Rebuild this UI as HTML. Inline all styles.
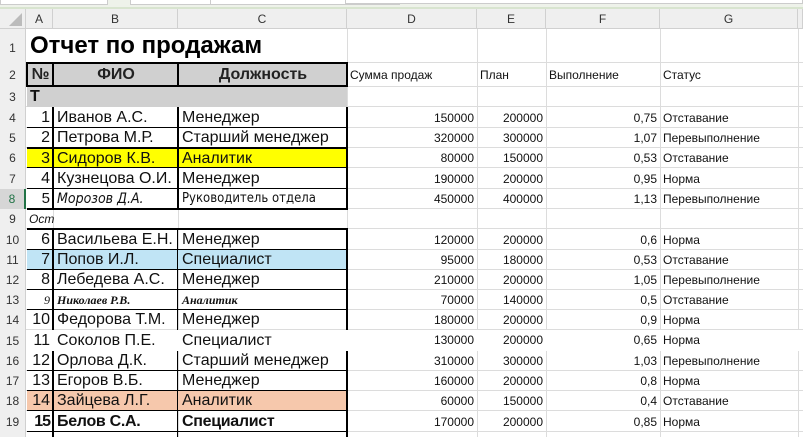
<!DOCTYPE html>
<html><head><meta charset="utf-8"><style>
body{margin:0;width:803px;height:437px;overflow:hidden;background:#fff;position:relative;font-family:"Liberation Sans",Arial,sans-serif;}
div{position:absolute;box-sizing:border-box;}
.vl{top:9px;bottom:0;width:1px;background:#dcdcdc}
.hl{left:0;right:0;height:1px;background:#dcdcdc}
.rh{left:0;width:26px;background:#efefef;border-right:1px solid #d0d0d0;font-size:12px;color:#333;text-align:center}
.ch{top:9px;height:20px;background:#efefef;font-size:12px;color:#333;text-align:center;line-height:20px;border-right:1px solid #d0d0d0;border-bottom:1px solid #d0d0d0}
.c{font-size:16px;color:#111;white-space:nowrap;overflow:hidden;padding:0 3px}
.s{font-size:12px;color:#111;white-space:nowrap;padding:0 3px}
.r{text-align:right}
</style></head><body>
<div style="left:0;top:0;width:803px;height:9px;background:#eef2ea"></div>
<div style="left:130px;top:0;width:195px;height:5px;background:#fff;border:1px solid #ccc;border-top:none"></div>
<div style="left:210px;top:0;width:190px;height:5px;background:#fff;border:1px solid #ccc;border-top:none"></div>
<div style="left:0;top:0;width:108px;height:5px;background:#fff;border:1px solid #ccc;border-top:none"></div>
<div style="left:0;top:7px;width:803px;height:2px;background:#d8e4cf"></div>
<div style="left:345px;top:0;width:458px;height:4px;background:#fff;border:1px solid #ccc;border-top:none"></div>

<div class="vl" style="left:53px"></div><div class="vl" style="left:178px"></div><div class="vl" style="left:347px"></div><div class="vl" style="left:477px"></div><div class="vl" style="left:546px"></div><div class="vl" style="left:660px"></div><div class="vl" style="left:798px"></div>
<div class="hl" style="top:62px"></div><div class="hl" style="top:86px"></div><div class="hl" style="top:106px"></div><div class="hl" style="top:127px"></div><div class="hl" style="top:147px"></div><div class="hl" style="top:167px"></div><div class="hl" style="top:188px"></div><div class="hl" style="top:208px"></div><div class="hl" style="top:228px"></div><div class="hl" style="top:249px"></div><div class="hl" style="top:269px"></div><div class="hl" style="top:289px"></div><div class="hl" style="top:309px"></div><div class="hl" style="top:329px"></div><div class="hl" style="top:350px"></div><div class="hl" style="top:370px"></div><div class="hl" style="top:390px"></div><div class="hl" style="top:410px"></div><div class="hl" style="top:431px"></div>

<div class="ch" style="left:0;width:26px"></div>
<div style="left:9px;top:13px;width:0;height:0;border-left:13px solid transparent;border-bottom:13px solid #bbb"></div>
<div class="ch" style="left:26px;width:27px">A</div>
<div class="ch" style="left:53px;width:125px">B</div>
<div class="ch" style="left:178px;width:169px">C</div>
<div class="ch" style="left:347px;width:130px">D</div>
<div class="ch" style="left:477px;width:69px">E</div>
<div class="ch" style="left:546px;width:114px">F</div>
<div class="ch" style="left:660px;width:138px">G</div>
<div class="ch" style="left:798px;width:5px"></div>

<div class="rh" style="top:29px;height:34px;line-height:38px">1</div>
<div class="rh" style="top:63px;height:24px;line-height:25px">2</div>
<div class="rh" style="top:87px;height:20px;line-height:21px">3</div>
<div class="rh" style="top:107px;height:21px;line-height:22px">4</div>
<div class="rh" style="top:128px;height:20px;line-height:21px">5</div>
<div class="rh" style="top:148px;height:20px;line-height:21px">6</div>
<div class="rh" style="top:168px;height:21px;line-height:22px">7</div>
<div class="rh" style="top:189px;height:20px;line-height:21px;color:#217346;background:#d6d6d6;border-right:2px solid #217346">8</div>
<div class="rh" style="top:209px;height:20px;line-height:21px">9</div>
<div class="rh" style="top:229px;height:21px;line-height:22px">10</div>
<div class="rh" style="top:250px;height:20px;line-height:21px">11</div>
<div class="rh" style="top:270px;height:20px;line-height:21px">12</div>
<div class="rh" style="top:290px;height:20px;line-height:21px">13</div>
<div class="rh" style="top:310px;height:20px;line-height:21px">14</div>
<div class="rh" style="top:330px;height:21px;line-height:22px">15</div>
<div class="rh" style="top:351px;height:20px;line-height:21px">16</div>
<div class="rh" style="top:371px;height:20px;line-height:21px">17</div>
<div class="rh" style="top:391px;height:20px;line-height:21px">18</div>
<div class="rh" style="top:411px;height:21px;line-height:22px">19</div>
<div class="rh" style="top:432px;height:5px"></div>

<div style="left:27px;top:29px;width:320px;height:34px;background:#fff"></div>
<div style="left:30px;top:32px;font-size:24px;font-weight:bold;color:#000;white-space:nowrap">Отчет по продажам</div>

<div style="left:26px;top:62px;width:322px;height:25px;background:#d0d0d0;border:2px solid #000"></div>
<div style="left:52px;top:62px;width:2px;height:25px;background:#000"></div>
<div style="left:177px;top:62px;width:2px;height:25px;background:#000"></div>
<div class="c" style="left:28px;top:64px;width:25px;line-height:21px;font-weight:bold;text-align:center;color:#222">№</div>
<div class="c" style="left:54px;top:64px;width:124px;line-height:21px;font-weight:bold;text-align:center;color:#222">ФИО</div>
<div class="c" style="left:179px;top:64px;width:168px;line-height:21px;font-weight:bold;text-align:center;color:#222">Должность</div>
<div class="s" style="left:347px;top:63px;line-height:25px">Сумма продаж</div>
<div class="s" style="left:477px;top:63px;line-height:25px">План</div>
<div class="s" style="left:546px;top:63px;line-height:25px">Выполнение</div>
<div class="s" style="left:660px;top:63px;line-height:25px">Статус</div>

<div style="left:27px;top:87px;width:320px;height:20px;background:#d0d0d0"></div>
<div class="c" style="left:27px;top:87px;line-height:20px;font-weight:bold">Т</div>

<div style="left:27px;top:148px;width:320px;height:20px;background:#ffff00"></div>
<div style="left:27px;top:250px;width:320px;height:20px;background:#c0e4f5"></div>
<div style="left:27px;top:391px;width:320px;height:20px;background:#f6c8ac"></div>
<div style="left:0;top:330px;width:803px;height:21px;background:#fff"></div>
<div class="rh" style="top:330px;height:21px;line-height:22px">15</div>

<div style="left:52px;top:107px;width:2px;height:102px;background:#000"></div>
<div style="left:177px;top:107px;width:2px;height:102px;background:#000"></div>
<div style="left:346px;top:107px;width:2px;height:102px;background:#000"></div>
<div style="left:27px;top:127px;width:321px;height:1px;background:#000"></div>
<div style="left:27px;top:147px;width:321px;height:2px;background:#000"></div>
<div style="left:27px;top:167px;width:321px;height:1px;background:#000"></div>
<div style="left:27px;top:188px;width:321px;height:1px;background:#000"></div>
<div style="left:27px;top:208px;width:321px;height:2px;background:#000"></div>
<div style="left:27px;top:228px;width:321px;height:2px;background:#000"></div>
<div style="left:52px;top:229px;width:2px;height:101px;background:#000"></div>
<div style="left:177px;top:229px;width:1px;height:101px;background:#000"></div>
<div style="left:346px;top:229px;width:2px;height:101px;background:#000"></div>
<div style="left:27px;top:249px;width:321px;height:1px;background:#000"></div>
<div style="left:27px;top:269px;width:321px;height:1px;background:#000"></div>
<div style="left:27px;top:289px;width:321px;height:1px;background:#000"></div>
<div style="left:27px;top:309px;width:321px;height:1px;background:#000"></div>
<div style="left:52px;top:351px;width:2px;height:86px;background:#000"></div>
<div style="left:177px;top:351px;width:1px;height:86px;background:#000"></div>
<div style="left:346px;top:351px;width:2px;height:86px;background:#000"></div>
<div style="left:27px;top:370px;width:321px;height:1px;background:#000"></div>
<div style="left:27px;top:390px;width:321px;height:1px;background:#000"></div>
<div style="left:27px;top:410px;width:321px;height:1px;background:#000"></div>
<div style="left:27px;top:431px;width:321px;height:1px;background:#000"></div>

<div class="c r" style="left:26px;top:108px;width:27px;line-height:20px">1</div><div class="c" style="left:54px;top:108px;line-height:20px">Иванов А.С.</div><div class="c" style="left:179px;top:108px;line-height:20px">Менеджер</div>
<div class="s r" style="left:347px;top:108px;width:130px;line-height:20px">150000</div><div class="s r" style="left:477px;top:108px;width:69px;line-height:20px">200000</div><div class="s r" style="left:546px;top:108px;width:114px;line-height:20px">0,75</div><div class="s" style="left:660px;top:108px;line-height:20px">Отставание</div>

<div class="c r" style="left:26px;top:128px;width:27px;line-height:20px">2</div><div class="c" style="left:54px;top:128px;line-height:20px">Петрова М.Р.</div><div class="c" style="left:179px;top:128px;line-height:20px">Старший менеджер</div>
<div class="s r" style="left:347px;top:128px;width:130px;line-height:20px">320000</div><div class="s r" style="left:477px;top:128px;width:69px;line-height:20px">300000</div><div class="s r" style="left:546px;top:128px;width:114px;line-height:20px">1,07</div><div class="s" style="left:660px;top:128px;line-height:20px">Перевыполнение</div>

<div class="c r" style="left:26px;top:149px;width:27px;line-height:20px">3</div><div class="c" style="left:54px;top:149px;line-height:20px">Сидоров К.В.</div><div class="c" style="left:179px;top:149px;line-height:20px">Аналитик</div>
<div class="s r" style="left:347px;top:148px;width:130px;line-height:20px">80000</div><div class="s r" style="left:477px;top:148px;width:69px;line-height:20px">150000</div><div class="s r" style="left:546px;top:148px;width:114px;line-height:20px">0,53</div><div class="s" style="left:660px;top:148px;line-height:20px">Отставание</div>

<div class="c r" style="left:26px;top:169px;width:27px;line-height:20px">4</div><div class="c" style="left:54px;top:169px;line-height:20px">Кузнецова О.И.</div><div class="c" style="left:179px;top:169px;line-height:20px">Менеджер</div>
<div class="s r" style="left:347px;top:169px;width:130px;line-height:20px">190000</div><div class="s r" style="left:477px;top:169px;width:69px;line-height:20px">200000</div><div class="s r" style="left:546px;top:169px;width:114px;line-height:20px">0,95</div><div class="s" style="left:660px;top:169px;line-height:20px">Норма</div>

<div class="c r" style="left:26px;top:189px;width:27px;line-height:20px;font-size:15px">5</div><div class="c" style="left:54px;top:189px;line-height:20px;font-size:14px;font-style:italic;font-family:'DejaVu Sans Condensed','DejaVu Sans',sans-serif">Морозов Д.А.</div><div class="c" style="left:179px;top:189px;line-height:20px;font-size:13px;font-family:'DejaVu Sans Condensed','DejaVu Sans',sans-serif">Руководитель отдела</div>
<div class="s r" style="left:347px;top:189px;width:130px;line-height:20px">450000</div><div class="s r" style="left:477px;top:189px;width:69px;line-height:20px">400000</div><div class="s r" style="left:546px;top:189px;width:114px;line-height:20px">1,13</div><div class="s" style="left:660px;top:189px;line-height:20px">Перевыполнение</div>

<div class="s" style="left:26px;top:209px;line-height:20px;font-style:italic">Ост</div>

<div class="c r" style="left:26px;top:230px;width:27px;line-height:20px">6</div><div class="c" style="left:54px;top:230px;line-height:20px">Васильева Е.Н.</div><div class="c" style="left:179px;top:230px;line-height:20px">Менеджер</div>
<div class="s r" style="left:347px;top:230px;width:130px;line-height:20px">120000</div><div class="s r" style="left:477px;top:230px;width:69px;line-height:20px">200000</div><div class="s r" style="left:546px;top:230px;width:114px;line-height:20px">0,6</div><div class="s" style="left:660px;top:230px;line-height:20px">Норма</div>

<div class="c r" style="left:26px;top:250px;width:27px;line-height:20px">7</div><div class="c" style="left:54px;top:250px;line-height:20px">Попов И.Л.</div><div class="c" style="left:179px;top:250px;line-height:20px">Специалист</div>
<div class="s r" style="left:347px;top:250px;width:130px;line-height:20px">95000</div><div class="s r" style="left:477px;top:250px;width:69px;line-height:20px">180000</div><div class="s r" style="left:546px;top:250px;width:114px;line-height:20px">0,53</div><div class="s" style="left:660px;top:250px;line-height:20px">Отставание</div>

<div class="c r" style="left:26px;top:270px;width:27px;line-height:20px">8</div><div class="c" style="left:54px;top:270px;line-height:20px">Лебедева А.С.</div><div class="c" style="left:179px;top:270px;line-height:20px">Менеджер</div>
<div class="s r" style="left:347px;top:270px;width:130px;line-height:20px">210000</div><div class="s r" style="left:477px;top:270px;width:69px;line-height:20px">200000</div><div class="s r" style="left:546px;top:270px;width:114px;line-height:20px">1,05</div><div class="s" style="left:660px;top:270px;line-height:20px">Перевыполнение</div>

<div class="c r" style="left:26px;top:290px;width:27px;line-height:20px;font-size:12px;font-style:italic;font-family:'Liberation Serif',serif">9</div><div class="c" style="left:54px;top:290px;line-height:20px;font-size:12px;font-weight:bold;font-style:italic;font-family:'Liberation Serif',serif">Николаев Р.В.</div><div class="c" style="left:179px;top:290px;line-height:20px;font-size:12px;font-weight:bold;font-style:italic;font-family:'Liberation Serif',serif">Аналитик</div>
<div class="s r" style="left:347px;top:290px;width:130px;line-height:20px">70000</div><div class="s r" style="left:477px;top:290px;width:69px;line-height:20px">140000</div><div class="s r" style="left:546px;top:290px;width:114px;line-height:20px">0,5</div><div class="s" style="left:660px;top:290px;line-height:20px">Отставание</div>

<div class="c r" style="left:26px;top:310px;width:27px;line-height:20px">10</div><div class="c" style="left:54px;top:310px;line-height:20px">Федорова Т.М.</div><div class="c" style="left:179px;top:310px;line-height:20px">Менеджер</div>
<div class="s r" style="left:347px;top:310px;width:130px;line-height:20px">180000</div><div class="s r" style="left:477px;top:310px;width:69px;line-height:20px">200000</div><div class="s r" style="left:546px;top:310px;width:114px;line-height:20px">0,9</div><div class="s" style="left:660px;top:310px;line-height:20px">Норма</div>

<div class="c r" style="left:26px;top:330px;width:27px;line-height:21px">11</div><div class="c" style="left:54px;top:330px;line-height:21px">Соколов П.Е.</div><div class="c" style="left:179px;top:330px;line-height:21px">Специалист</div>
<div class="s r" style="left:347px;top:330px;width:130px;line-height:21px">130000</div><div class="s r" style="left:477px;top:330px;width:69px;line-height:21px">200000</div><div class="s r" style="left:546px;top:330px;width:114px;line-height:21px">0,65</div><div class="s" style="left:660px;top:330px;line-height:21px">Норма</div>

<div class="c r" style="left:26px;top:351px;width:27px;line-height:20px">12</div><div class="c" style="left:54px;top:351px;line-height:20px">Орлова Д.К.</div><div class="c" style="left:179px;top:351px;line-height:20px">Старший менеджер</div>
<div class="s r" style="left:347px;top:351px;width:130px;line-height:20px">310000</div><div class="s r" style="left:477px;top:351px;width:69px;line-height:20px">300000</div><div class="s r" style="left:546px;top:351px;width:114px;line-height:20px">1,03</div><div class="s" style="left:660px;top:351px;line-height:20px">Перевыполнение</div>

<div class="c r" style="left:26px;top:371px;width:27px;line-height:20px">13</div><div class="c" style="left:54px;top:371px;line-height:20px">Егоров В.Б.</div><div class="c" style="left:179px;top:371px;line-height:20px">Менеджер</div>
<div class="s r" style="left:347px;top:371px;width:130px;line-height:20px">160000</div><div class="s r" style="left:477px;top:371px;width:69px;line-height:20px">200000</div><div class="s r" style="left:546px;top:371px;width:114px;line-height:20px">0,8</div><div class="s" style="left:660px;top:371px;line-height:20px">Норма</div>

<div class="c r" style="left:26px;top:391px;width:27px;line-height:20px">14</div><div class="c" style="left:54px;top:391px;line-height:20px">Зайцева Л.Г.</div><div class="c" style="left:179px;top:391px;line-height:20px">Аналитик</div>
<div class="s r" style="left:347px;top:391px;width:130px;line-height:20px">60000</div><div class="s r" style="left:477px;top:391px;width:69px;line-height:20px">150000</div><div class="s r" style="left:546px;top:391px;width:114px;line-height:20px">0,4</div><div class="s" style="left:660px;top:391px;line-height:20px">Отставание</div>

<div class="c r" style="left:26px;top:412px;width:27px;line-height:20px;font-weight:900;letter-spacing:-1px">15</div><div class="c" style="left:54px;top:412px;line-height:20px;font-weight:900;letter-spacing:-0.3px">Белов С.А.</div><div class="c" style="left:179px;top:412px;line-height:20px;font-weight:900;letter-spacing:-0.3px">Специалист</div>
<div class="s r" style="left:347px;top:412px;width:130px;line-height:20px">170000</div><div class="s r" style="left:477px;top:412px;width:69px;line-height:20px">200000</div><div class="s r" style="left:546px;top:412px;width:114px;line-height:20px">0,85</div><div class="s" style="left:660px;top:412px;line-height:20px">Норма</div>
</body></html>
